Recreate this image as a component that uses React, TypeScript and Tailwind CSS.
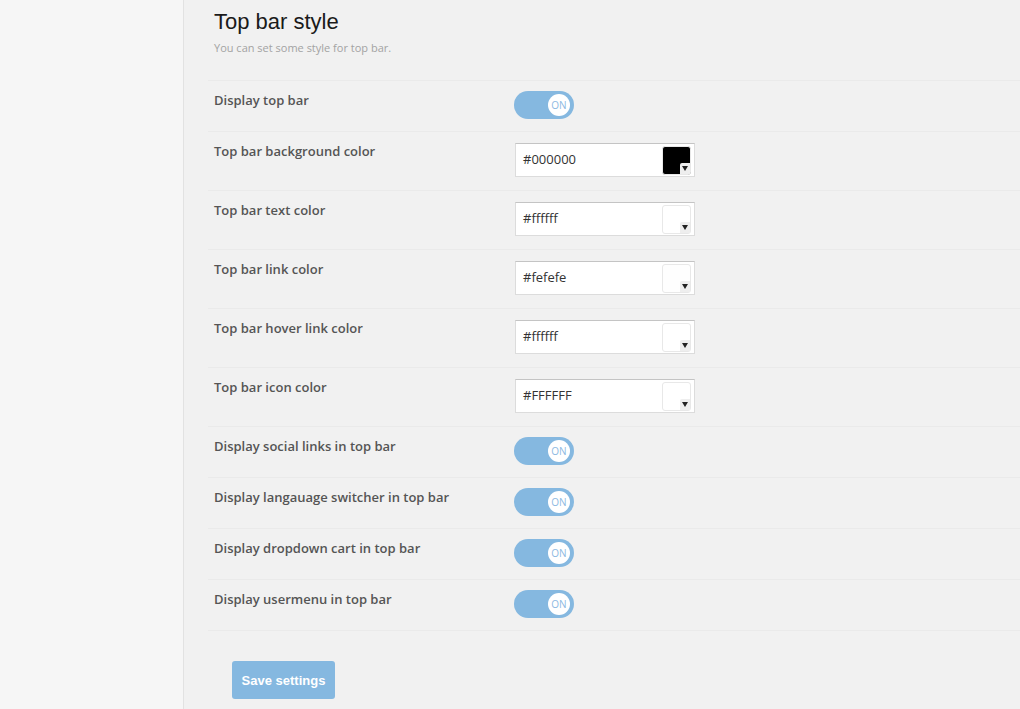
import React from "react";

type Row =
  | { kind: "toggle"; label: string }
  | { kind: "color"; label: string; value: string; swatch: string };

const rows: Row[] = [
  { kind: "toggle", label: "Display top bar" },
  { kind: "color", label: "Top bar background color", value: "#000000", swatch: "#000000" },
  { kind: "color", label: "Top bar text color", value: "#ffffff", swatch: "#ffffff" },
  { kind: "color", label: "Top bar link color", value: "#fefefe", swatch: "#fefefe" },
  { kind: "color", label: "Top bar hover link color", value: "#ffffff", swatch: "#ffffff" },
  { kind: "color", label: "Top bar icon color", value: "#FFFFFF", swatch: "#FFFFFF" },
  { kind: "toggle", label: "Display social links in top bar" },
  { kind: "toggle", label: "Display langauage switcher in top bar" },
  { kind: "toggle", label: "Display dropdown cart in top bar" },
  { kind: "toggle", label: "Display usermenu in top bar" },
];

function Toggle() {
  return (
    <div className="relative h-[28px] w-[60px] rounded-full bg-[#85b8e0]">
      <div className="absolute right-[4px] top-[3px] flex h-[22px] w-[22px] items-center justify-center rounded-full bg-white">
        <span className="font-['Open_Sans',sans-serif] text-[10px] leading-none text-[#8cb9e2]">ON</span>
      </div>
    </div>
  );
}

function ColorInput({ value, swatch }: { value: string; swatch: string }) {
  return (
    <div className="my-[1px] flex h-[34px] w-[180px] items-center justify-between border border-[#dcdcdc] border-t-[#c4c4c4] bg-white pl-[7px] pr-[3px]">
      <span className="font-['Open_Sans',sans-serif] text-[13px] text-[#333]">{value}</span>
      <div
        className="relative h-[29px] w-[29px] rounded-[3px] border border-[#e8e8e8]"
        style={{ backgroundColor: swatch }}
      >
        <div className="absolute bottom-0 right-0 flex h-[11px] w-[10px] items-center justify-center rounded-tl-[2px] bg-[#eeeeee]">
          <svg width="6" height="5" viewBox="0 0 6 5">
            <path d="M0 0 L6 0 L3 5 Z" fill="#222" />
          </svg>
        </div>
      </div>
    </div>
  );
}

export default function App() {
  return (
    <div className="flex h-[709px] w-full overflow-hidden bg-[#f1f1f1]">
      <div className="h-full w-[184px] shrink-0 border-r border-[#e2e2e2] bg-[#f6f6f6]" />
      <div className="flex-1 pl-[24px]">
        <div className="pl-[6px] pt-[9px]">
          <h1 className="font-['Liberation_Sans',Arial,sans-serif] text-[22px] leading-[26px] text-[#1a1a1a]">
            Top bar style
          </h1>
          <p className="mt-[5px] font-['Open_Sans',sans-serif] text-[11px] leading-[16px] text-[#a3a3a3]">
            You can set some style for top bar.
          </p>
        </div>
        <div className="mt-[24px] border-b border-[#eaeaea]">
          {rows.map((r, i) => (
            <div
              key={i}
              className="flex items-start border-t border-[#eaeaea] pb-[12px] pl-[6px] pt-[10px]"
            >
              <div className="-mt-[1px] w-[300px] shrink-0 font-['Open_Sans',sans-serif] text-[13px] font-semibold leading-[20px] text-[#555]">
                {r.label}
              </div>
              {r.kind === "toggle" ? (
                <Toggle />
              ) : (
                <div className="pl-[1px]">
                  <ColorInput value={r.value} swatch={r.swatch} />
                </div>
              )}
            </div>
          ))}
        </div>
        <div className="pl-[24px] pt-[30px]">
          <button className="h-[38px] w-[103px] rounded-[3px] bg-[#85b8e0] pt-[1px] font-['Liberation_Sans',Arial,sans-serif] text-[13px] font-bold text-white">
            Save settings
          </button>
        </div>
      </div>
    </div>
  );
}
